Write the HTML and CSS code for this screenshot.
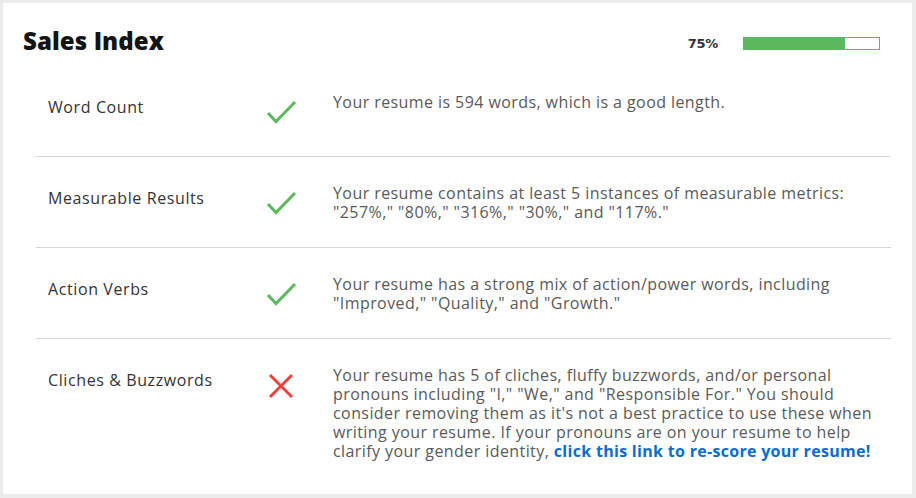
FILE: index.html
```html
<!DOCTYPE html>
<html>
<head>
<meta charset="utf-8">
<link rel="stylesheet" href="styles.css">
</head>
<body>
<div class="card">
  <div class="header">
    <h1 class="title">Sales Index</h1>
    <div class="score">
      <span class="pct">75%</span>
      <div class="bar"><div class="fill" style="width:75%"></div></div>
    </div>
  </div>
  <div class="rows">
    <div class="row">
      <div class="label">Word Count</div>
      <div class="icon"><svg width="32" height="26" viewBox="0 0 32 26"><path d="M2 13 L10 21.5 L29 2" class="ok"/></svg></div>
      <div class="desc">Your resume is 594 words, which is a good length.</div>
    </div>
    <div class="row">
      <div class="label">Measurable Results</div>
      <div class="icon"><svg width="32" height="26" viewBox="0 0 32 26"><path d="M2 13 L10 21.5 L29 2" class="ok"/></svg></div>
      <div class="desc">Your resume contains at least 5 instances of measurable metrics: "257%," "80%," "316%," "30%," and "117%."</div>
    </div>
    <div class="row">
      <div class="label">Action Verbs</div>
      <div class="icon"><svg width="32" height="26" viewBox="0 0 32 26"><path d="M2 13 L10 21.5 L29 2" class="ok"/></svg></div>
      <div class="desc">Your resume has a strong mix of action/power words, including "Improved," "Quality," and "Growth."</div>
    </div>
    <div class="row last">
      <div class="label">Cliches &amp; Buzzwords</div>
      <div class="icon"><svg width="32" height="26" viewBox="0 0 32 26"><path d="M4 2 L26 24 M26 2 L4 24" class="bad"/></svg></div>
      <div class="desc">Your resume has 5 of cliches, fluffy buzzwords, and/or personal pronouns including "I," "We," and "Responsible For." You should consider removing them as it's not a best practice to use these when writing your resume. If your pronouns are on your resume to help clarify your gender identity, <a class="link" href="#">click this link to re-score your resume!</a></div>
    </div>
  </div>
</div>
</body>
</html>
```

FILE: styles.css
```css
* { box-sizing: border-box; }
html, body { margin: 0; padding: 0; background: #fff; }
body { font-family: "Open Sans", "DejaVu Sans", sans-serif; }
.card {
  width: 916px;
  height: 498px;
  border: 3px solid #ebebeb;
  border-right-width: 4px;
  border-bottom-width: 4px;
  background: #fff;
}
.header {
  display: flex;
  align-items: center;
  justify-content: space-between;
  height: 63px;
  padding: 12px 32px 0 20px;
}
.title {
  margin: 0;
  font-size: 24px;
  font-weight: 800;
  color: #141414;
  letter-spacing: 0.1px;
}
.score {
  display: flex;
  align-items: center;
  gap: 25px;
  margin-top: 5px;
}
.pct {
  font-family: "DejaVu Sans", sans-serif;
  font-weight: bold;
  font-size: 13px;
  color: #333;
  letter-spacing: -0.3px;
}
.bar {
  width: 137px;
  height: 13px;
  border: 1px solid #5cb85c;
  background: #fff;
}
.fill { height: 100%; background: #5cb85c; }
.rows { margin: 0 21px 0 33px; }
.row {
  display: grid;
  grid-template-columns: 218px 67px 1fr;
  padding: 27px 0 0 12px;
  min-height: 91px;
  border-bottom: 1px solid #d8d8d8;
}
.row.last { border-bottom: none; }
.label {
  font-size: 16px;
  line-height: 19px;
  color: #333;
  padding-top: 5px;
  letter-spacing: 0.6px;
}
.icon { padding-top: 7px; }
.icon svg { display: block; }
.ok { fill: none; stroke: #5cb85c; stroke-width: 3; }
.bad { fill: none; stroke: #f0403c; stroke-width: 3; }
.desc {
  font-size: 16px;
  line-height: 19px;
  color: #595959;
  padding-right: 12px;
  letter-spacing: 0.42px;
}
.link {
  color: #0a6ccf;
  font-weight: 700;
  text-decoration: none;
  letter-spacing: 0.3px;
}
```
